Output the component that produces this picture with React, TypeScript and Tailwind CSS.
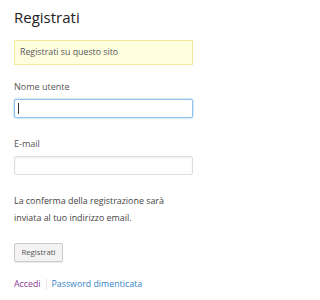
const font = { fontFamily: '"Open Sans", "Liberation Sans", sans-serif' };

export default function App() {
  return (
    <div
      className="w-[228px] h-[300px] bg-white text-[#444] pl-[14px] pr-[35px] pt-[7px]"
      style={font}
    >
      <h1 className="text-[15px] leading-[20px] text-[#222] font-normal">Registrati</h1>

      <div className="mt-[13px] h-[25px] border border-[#f1ea9c] bg-[#ffffe0] pl-[5px] text-[8.8px] leading-[23px] text-[#555]">
        Registrati su questo sito
      </div>

      <form className="mt-[15px]" onSubmit={(e) => e.preventDefault()}>
        <label className="block text-[9px] leading-[14px] text-[#555]">Nome utente</label>
        <div className="relative mt-[5px]">
          <input
            type="text"
            className="block w-full h-[19px] border border-[#8ec2f0] rounded-[2px] bg-white shadow-[0_0_2px_rgba(30,140,190,0.6)] caret-transparent outline-none"
          />
          <span className="absolute left-[4px] top-[4px] w-px h-[11px] bg-[#333]" />
        </div>

        <label className="block mt-[19px] text-[9px] leading-[14px] text-[#555]">E-mail</label>
        <input
          type="email"
          className="block mt-[5px] w-full h-[19px] border border-[#ddd] rounded-[2px] bg-white shadow-[inset_0_1px_2px_rgba(0,0,0,0.07)] outline-none"
        />

        <p className="mt-[17px] max-w-[170px] text-[8.9px] leading-[17px] text-[#444]">
          La conferma della registrazione sarà inviata al tuo indirizzo email.
        </p>

        <button
          type="submit"
          className="mt-[17px] block w-[49px] h-[19px] border border-[#ccc] rounded-[2px] bg-[#f3f3f3] text-[7.8px] text-[#555] shadow-[0_1px_0_rgba(0,0,0,0.08)]"
        >
          Registrati
        </button>
      </form>

      <p className="mt-[15px] flex items-center text-[8.8px] leading-[14px]">
        <a href="#" className="text-[#8b3b93]">Accedi</a>
        <span className="mx-[5px] w-px h-[11px] bg-[#e5e5e5]" />
        <a href="#" className="text-[#3584c8]">Password dimenticata</a>
      </p>
    </div>
  );
}
